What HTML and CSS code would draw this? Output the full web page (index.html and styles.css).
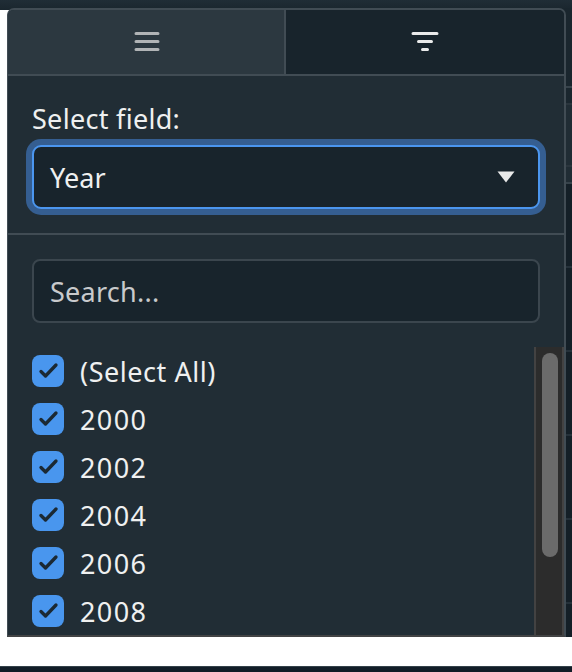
FILE: index.html
```
<!DOCTYPE html>
<html lang="en">
<head>
<meta charset="utf-8">
<title>Filter by field</title>
<link rel="stylesheet" href="styles.css">
</head>
<body>
<div class="topbar"></div>
<div class="workspace">
  <main class="panel">
    <div class="tabs">
      <div class="tab">
        <svg width="28" height="22" viewBox="0 0 28 22"><path d="M4 3.5H26M4 11.5H26M4 19.5H26"/></svg>
      </div>
      <div class="tab active">
        <svg width="28" height="22" viewBox="0 0 28 22"><path d="M2 3.5H26M7.5 11.5H20.500M11.500 19.500H16.500"/></svg>
      </div>
    </div>
    <section class="field">
      <label class="label">Select field:</label>
      <div class="select"><span class="year">Year</span>
        <svg width="18" height="12" viewBox="0 0 18 12"><path d="M.5 .5H17.500L9 11.500Z"/></svg>
      </div>
    </section>
    <section class="filter">
      <div class="search"><span class="placeholder">Search...</span></div>
      <div class="scroll">
        <ul class="options">
          <li><i class="check"><svg viewBox="0 0 32 32"><path d="M9 16.500L13.500 21L24 10"/></svg></i><span class="all">(Select All)</span></li>
          <li><i class="check"><svg viewBox="0 0 32 32"><path d="M9 16.500L13.500 21L24 10"/></svg></i><span class="num">2000</span></li>
          <li><i class="check"><svg viewBox="0 0 32 32"><path d="M9 16.500L13.500 21L24 10"/></svg></i><span class="num">2002</span></li>
          <li><i class="check"><svg viewBox="0 0 32 32"><path d="M9 16.500L13.500 21L24 10"/></svg></i><span class="num">2004</span></li>
          <li><i class="check"><svg viewBox="0 0 32 32"><path d="M9 16.500L13.500 21L24 10"/></svg></i><span class="num">2006</span></li>
          <li><i class="check"><svg viewBox="0 0 32 32"><path d="M9 16.500L13.500 21L24 10"/></svg></i><span class="num">2008</span></li>
        </ul>
        <div class="track"><div class="thumb"></div></div>
      </div>
    </section>
  </main>
  <aside class="grid-edge">
    <div class="edge-top"></div>
    <div class="edge-gap"></div>
    <div class="edge-group"></div>
    <div class="edge-head"></div>
    <div class="edge-row"></div>
    <div class="edge-row"></div>
    <div class="edge-row"></div>
    <div class="edge-row"></div>
    <div class="edge-row"></div>
    <div class="edge-rest"></div>
  </aside>
</div>
<div class="bottombar"></div>
</body>
</html>
```

FILE: styles.css
```
* { box-sizing: border-box; }
body {
  margin: 0;
  height: 672px;
  overflow: hidden;
  display: flex;
  flex-direction: column;
  background: #fff;
  color: #eff0f0;
  font: 400 27px/32px "Noto Sans", sans-serif;
}
svg { display: block; fill: none; }
.topbar { height: 10px; flex: none; background: linear-gradient(#202d36, #1a262e); }
.workspace { display: flex; height: 629px; flex: none; margin-top: -2px; padding-left: 7px; }
.panel {
  z-index: 1;
  width: 559px;
  height: 629px;
  flex: none;
  display: flex;
  flex-direction: column;
  border: 2px solid #414c54;
  border-left-width: 1px;
  border-bottom-color: #424344;
  border-radius: 7px 7px 0 0;
  background: #212d35;
  overflow: hidden;
}
.tabs { display: flex; height: 66px; flex: none; border-bottom: 2px solid #414c54; }
.tab {
  width: 278px;
  display: flex;
  align-items: center;
  justify-content: center;
  background: #2c3840;
  border-right: 2px solid #414c54;
}
.tab svg { stroke: #b1b4b6; stroke-width: 3; stroke-linecap: round; margin-top: -2px; }
.tab.active { background: #18242c; border: 0; flex: 1; }
.tab.active svg { stroke: #e9eaea; }
.field { height: 159px; flex: none; padding: 27px 24px 24px; border-bottom: 2px solid #414c54; }
.label { display: block; height: 42px; letter-spacing: .3px; }
.select {
  width: 508px;
  height: 64px;
  display: flex;
  align-items: center;
  justify-content: space-between;
  padding: 2px 23px 0 16px;
  border: 2px solid #4b96ef;
  border-radius: 9px;
  background: #18242c;
  box-shadow: 0 0 0 6px #355e91;
}
.select svg { fill: #e9eaea; margin-top: -3px; }
.year { padding-bottom: 1px; letter-spacing: .1px; }
.filter { flex: 1; padding-top: 24px; }
.search {
  width: 508px;
  height: 64px;
  margin-left: 24px;
  padding: 15px 16px;
  border: 2px solid #3b464e;
  border-radius: 8px;
  background: #18242c;
  color: #c8cacc;
}
.placeholder { letter-spacing: .25px; }
.scroll { display: flex; height: 288px; margin-top: 24px; }
.options { width: 526px; height: 288px; margin: 0; padding: 8px 24px 0; list-style: none; overflow: hidden; }
.options li { display: flex; height: 32px; margin-bottom: 16px; gap: 16px; }
.options span { padding-top: 1px; white-space: nowrap; }
.check { width: 32px; height: 32px; border-radius: 8px; background: #4996ee; }
.check path { stroke: #1b2933; stroke-width: 3.3; stroke-linecap: round; stroke-linejoin: round; }
.num { letter-spacing: 1.4px; }
.all { letter-spacing: .55px; }
.track { width: 30px; padding-top: 6px; border: solid #434242; border-width: 0 2px; background: #2c2c2c; }
.thumb { width: 16px; height: 204px; margin-left: 6px; border-radius: 8px; background: #6b6b6b; }
.grid-edge { flex: 1; display: flex; flex-direction: column; margin-left: -8px; padding-top: 2px; background: #1a262e; }
.edge-top { height: 78px; border-bottom: 2px solid #37434b; }
.edge-gap { height: 17px; border-bottom: 2px solid #2a353d; }
.edge-group { height: 62px; border-bottom: 2px solid #2a353d; background: #202c34; }
.edge-head { height: 17px; border-bottom: 2px solid #37434b; background: #202c34; }
.edge-row { height: 84px; border-bottom: 2px solid #25313a; background: #141f27; }
.edge-rest { flex: 1; background: #141f27; }
.bottombar { height: 6px; flex: none; margin-top: auto; background: #121d27; border-top: 1px solid #34424a; }
```
